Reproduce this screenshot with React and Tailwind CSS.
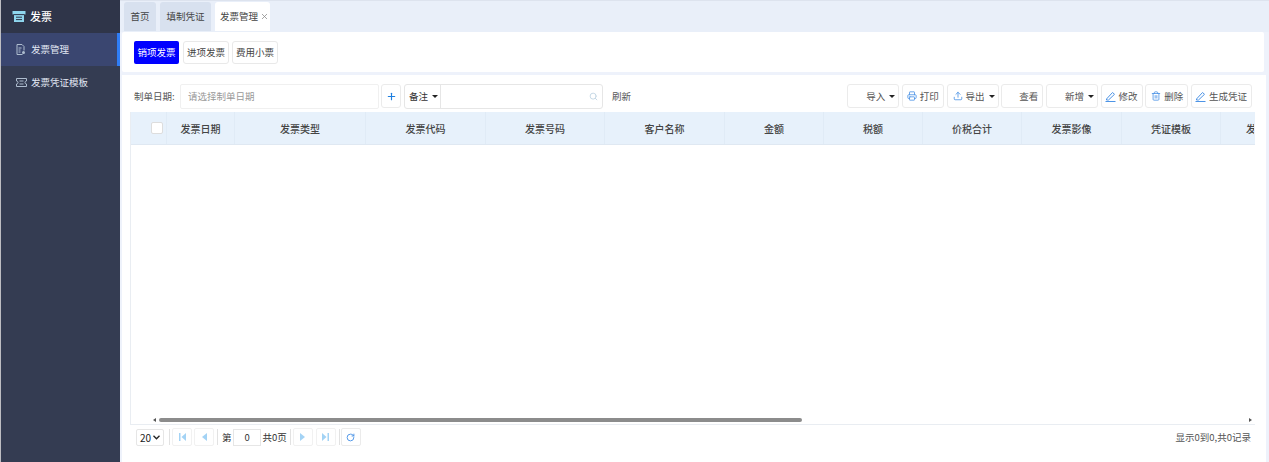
import React from "react";
import { Printer, Upload, Trash2, Plus, RotateCw, Search, X } from "lucide-react";

const Caret = () => <span className="inline-block ml-[1px] -mr-[1px] w-0 h-0 border-x-[3px] border-x-transparent border-t-[3.5px] border-t-[#222]" />;

const Pen = () => (
  <svg width="11" height="11" viewBox="0 0 11 11" fill="none" stroke="#4d94e6" strokeWidth="1">
    <path d="M1.5 8 7.5 1.5 9.5 3.3 3.5 9H1.5z" />
    <path d="M.5 10.5h10" />
  </svg>
);

const Btn = ({ w, children }) => (
  <div style={{ width: w }} className="h-[24px] shrink-0 flex items-center justify-end gap-[3px] pr-[4px] border border-[#ebebeb] rounded-[3px] bg-white text-[9.5px] text-[#555]">{children}</div>
);

const cols = [
  ["发票日期", 68], ["发票类型", 131], ["发票代码", 120], ["发票号码", 119], ["客户名称", 120],
  ["金额", 99], ["税额", 99], ["价税合计", 99], ["发票影像", 100], ["凭证模板", 99],
];

const PageBtn = ({ children, className = "" }) => (
  <div className={`w-[20px] h-[18px] shrink-0 flex items-center justify-center border border-[#f1f1f1] rounded-[2px] text-[#a3d3f5] ${className}`}>{children}</div>
);
const Sep = ({ className = "" }) => <div className={`w-px h-[16px] shrink-0 bg-[#e2e2e2] ${className}`} />;

export default function App() {
  return (
    <div className="flex w-[1269px] h-[462px] overflow-hidden bg-white text-[#444]" style={{ fontFamily: '"Noto Sans CJK SC","Liberation Sans",sans-serif' }}>
      <aside className="w-[120px] shrink-0 bg-[#343c52] border-l border-[#bdbdc2] flex flex-col">
        <div className="h-[33px] bg-[#2f3549] flex items-center pl-[11px] gap-[4px] text-white text-[11px] font-medium">
          <svg width="14" height="13" viewBox="0 0 14 13" fill="none">
            <path d="M0.5 1h13v3.5h-1.5v7.5H2V4.5H0.5z" fill="#8fd6ee" />
            <path d="M1.5 4.6h11M4 7.2h6M4 9.6h6" stroke="#2f3549" strokeWidth="1" />
          </svg>
          <span>发票</span>
        </div>
        <div className="h-[33px] bg-[#3a4670] border-r-[3px] border-[#2f7df6] flex items-center pl-[15px] gap-[5px] text-[9.5px] text-[#e2e8f4]">
          <svg width="10" height="11" viewBox="0 0 10 11" fill="none" stroke="#aebdcf">
            <path d="M6.5 10.5H1V.5h5l2 2v4M2.5 4h3M2.5 6h2M2.5 8h2" />
            <circle cx="7.5" cy="8.5" r="1.5" fill="#aebdcf" stroke="none" />
          </svg>
          <span>发票管理</span>
        </div>
        <div className="h-[33px] flex items-center pl-[15px] gap-[4px] text-[9.5px] text-[#e2e8f4]">
          <svg width="11" height="9" viewBox="0 0 11 9" fill="none" stroke="#aebdcf">
            <path d="M.5.5h10v2.5a1.5 1.5 0 0 0 0 3v2.5H.5V6a1.5 1.5 0 0 0 0-3z" />
            <path d="M3.5 3h4M3.5 6h4" />
          </svg>
          <span>发票凭证模板</span>
        </div>
      </aside>

      <main className="flex-1 min-w-0 flex flex-col bg-[#eef2fb]">
        <div className="h-[32px] shrink-0 bg-[#e9eff9] border-t border-[#dde3ee] flex items-end pl-[4px] gap-[4px] text-[9.5px]">
          <div className="h-[29px] w-[32px] mb-[1px] bg-[#d8e1ef] rounded-t-[3px] flex items-center justify-center text-[#444]">首页</div>
          <div className="h-[29px] w-[51px] mb-[1px] bg-[#d8e1ef] rounded-t-[3px] flex items-center justify-center text-[#444]">填制凭证</div>
          <div className="h-[29px] w-[55px] mb-[1px] bg-white rounded-t-[3px] flex items-center justify-center gap-[2px] pl-[4px] text-[#444]">发票管理<X size={9} className="text-[#888]" /></div>
        </div>

        <div className="h-[40px] shrink-0 ml-[2px] mr-[5px] bg-white rounded-[2px] flex items-center pl-[12px] gap-[4px] text-[9.5px]">
          <div className="w-[45px] h-[23px] bg-[#0000ff] text-white rounded-[2px] flex items-center justify-center">销项发票</div>
          <div className="w-[46px] h-[23px] border border-[#e9e9e9] rounded-[3px] flex items-center justify-center">进项发票</div>
          <div className="w-[46px] h-[23px] border border-[#e9e9e9] rounded-[3px] -ml-px flex items-center justify-center">费用小票</div>
        </div>

        <div className="flex-1 min-h-0 ml-[2px] mr-[3px] mt-[3px] bg-white flex">
          <div className="w-[8px] shrink-0" />
          <div className="w-[1125px] flex flex-col">
            <div className="h-[37px] shrink-0 flex items-center pt-[5px] text-[9.5px]">
              <span className="w-[50px] pl-[4px] shrink-0 text-[#555]">制单日期:</span>
              <div className="w-[199px] h-[25px] shrink-0 border border-[#f0f0f0] rounded-[2px] flex items-center pl-[7px] text-[#999]">请选择制单日期</div>
              <div className="w-[20px] h-[24px] ml-[2px] shrink-0 border border-[#ebebeb] rounded-[3px] flex items-center justify-center"><Plus size={11} strokeWidth={2.5} className="text-[#1e7fe0]" /></div>
              <div className="w-[199px] h-[25px] ml-[3px] shrink-0 border border-[#e6e6e6] rounded-[3px] flex items-center">
                <div className="w-[36px] h-full flex items-center gap-[3px] pl-[4px] border-r border-[#e6e6e6] text-[#333]">备注<Caret /></div>
                <div className="flex-1" />
                <Search size={9} strokeWidth={2.5} className="mr-[4px] text-[#c3d6e4]" />
              </div>
              <span className="ml-[9px] text-[#555]">刷新</span>
              <div className="ml-auto flex gap-[2.7px] pr-[3px]">
                <Btn w={52}>导入<Caret /></Btn>
                <Btn w={42}><Printer size={10} className="text-[#4d94e6]" />打印</Btn>
                <Btn w={52}><Upload size={10} className="text-[#4d94e6]" />导出<Caret /></Btn>
                <Btn w={42}>查看</Btn>
                <Btn w={52}>新增<Caret /></Btn>
                <Btn w={42}><Pen />修改</Btn>
                <Btn w={43}><Trash2 size={10} className="text-[#4d94e6]" />删除</Btn>
                <Btn w={61}><Pen />生成凭证</Btn>
              </div>
            </div>

            <div className="h-[313px] shrink-0 border-l border-b border-[#e9edf2] flex flex-col overflow-hidden">
              <div className="h-[33px] shrink-0 bg-[#e7f1fb] border-b border-[#dfe8f2] flex text-[10px] font-medium text-[#444] overflow-hidden">
                <div className="w-[36px] shrink-0 flex items-center justify-end pr-[2px] border-r border-[#e0ebf6]">
                  <span className="w-[12px] h-[12px] mr-[1px] bg-white border border-[#dddddd] rounded-[2px]" />
                </div>
                {cols.map(([t, w]) => (
                  <div key={t} style={{ width: w }} className="shrink-0 flex items-center justify-center border-r border-[#e0ebf6]">{t}</div>
                ))}
                <div className="shrink-0 w-[33px] pl-[25px] flex items-center overflow-hidden whitespace-nowrap">发</div>
              </div>
              <div className="flex-1" />
              <div className="h-[8px] shrink-0 flex items-center text-[#555]">
                <span className="w-[28px] flex justify-end pr-[3px]"><span className="w-0 h-0 border-y-[2.5px] border-y-transparent border-r-[3px] border-r-[#555]" /></span>
                <div className="h-[4px] w-[643px] bg-[#8c8c8c] rounded-[2px]" />
                <span className="ml-auto pr-[3px]"><span className="block w-0 h-0 border-y-[2.5px] border-y-transparent border-l-[3px] border-l-[#555]" /></span>
              </div>
            </div>

            <div className="h-[24px] shrink-0 flex items-center text-[9.5px] text-[#333] pl-[6px]">
              <div className="w-[28px] h-[17px] border border-[#e6e6e6] rounded-[2px] flex items-center justify-center gap-[2px] text-[10px] text-[#222]">20<svg width="7" height="5" viewBox="0 0 7 5" fill="none" stroke="#222" strokeWidth="1.3"><path d="M.5.8 3.5 3.8 6.5.8" /></svg></div>
              <Sep className="ml-[5px]" />
              <PageBtn className="ml-[2px]"><svg width="7" height="8" viewBox="0 0 7 8" fill="currentColor"><rect x="0" y="0" width="1.5" height="8" /><path d="M7 0v8L2.5 4z" /></svg></PageBtn>
              <PageBtn className="ml-[2px]"><svg width="5" height="8" viewBox="0 0 5 8" fill="currentColor"><path d="M5 0v8L0 4z" /></svg></PageBtn>
              <Sep className="ml-[3px]" />
              <span className="ml-[4px]">第</span>
              <div className="w-[28px] h-[17px] ml-[1.5px] border border-[#e6e6e6] flex items-center justify-center">0</div>
              <span className="ml-[1.5px]">共0页</span>
              <Sep className="ml-[3px]" />
              <PageBtn className="ml-[2px]"><svg width="5" height="8" viewBox="0 0 5 8" fill="currentColor"><path d="M0 0v8l5-4z" /></svg></PageBtn>
              <PageBtn className="ml-[3px]"><svg width="7" height="8" viewBox="0 0 7 8" fill="currentColor"><path d="M0 0v8l4.5-4z" /><rect x="5.5" y="0" width="1.5" height="8" /></svg></PageBtn>
              <Sep className="ml-[3px]" />
              <div className="w-[20px] h-[18px] ml-[1px] flex items-center justify-center border border-[#ebebeb] rounded-[2px]"><RotateCw size={9} strokeWidth={2.5} className="text-[#4d94e6]" /></div>
              <span className="ml-auto pr-[4px] text-[#555]">显示0到0,共0记录</span>
            </div>
          </div>
          <div className="flex-1" />
        </div>
      </main>
    </div>
  );
}
